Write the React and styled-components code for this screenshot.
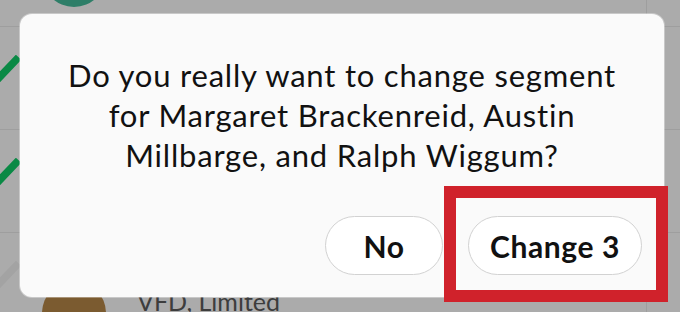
import React from "react";
import styled, { createGlobalStyle } from "styled-components";

const Global = createGlobalStyle`
  html, body { margin: 0; padding: 0; }
  body { font-family: Lato, "Noto Sans", sans-serif; background: #fff; }
  #root { width: 680px; height: 312px; overflow: hidden; position: relative; }
`;

const Page = styled.div`
  display: flex;
  width: 680px;
  height: 312px;
  overflow: hidden;
  background: #fff;
`;

const List = styled.div`
  flex: 1;
  display: flex;
  flex-direction: column;
  margin-top: -76px;
  margin-left: -30px;
`;

const Row = styled.div`
  display: flex;
  align-items: center;
  min-height: ${(p) => p.$h}px;
  border-bottom: 1px solid #ececec;
  box-sizing: border-box;
  flex-shrink: 0;
`;

const CheckCell = styled.div`
  align-self: flex-start;
  width: 72px;
  box-sizing: border-box;
  padding: 28px 0 0 12px;
  flex-shrink: 0;
`;

const Avatar = styled.div`
  width: 64px;
  height: 64px;
  border-radius: 50%;
  background: ${(p) => p.$c};
  flex-shrink: 0;
`;

const Info = styled.div`
  display: flex;
  flex-direction: column;
  margin: 0 0 24px 31px;
  font-size: 25px;
  line-height: 30px;
  color: #5c5c5c;
  white-space: nowrap;
`;

const SideCol = styled.div`
  width: 33px;
  border-left: 1px solid #ececec;
  display: flex;
  flex-direction: column;
  margin-top: -76px;
`;

const SideCell = styled.div`
  height: ${(p) => p.$h}px;
  border-bottom: 1px solid #ececec;
  box-sizing: border-box;
  flex-shrink: 0;
`;

const Dim = styled.div`
  position: absolute;
  inset: 0;
  background: rgba(0, 0, 0, 0.33);
`;

const Modal = styled.div`
  position: absolute;
  left: 20px;
  top: 14px;
  width: 644px;
  height: 283px;
  box-sizing: border-box;
  background: #fafafa;
  border-radius: 12px;
  box-shadow: 0 0 0 1px rgba(255, 255, 255, 0.35);
  display: flex;
  flex-direction: column;
  padding: 41px 22px 22px;
`;

const Message = styled.p`
  margin: 0;
  text-align: center;
  font-size: 31px;
  letter-spacing: 0.8px;
  line-height: 40px;
  color: #111;
  padding: 0 20px;
`;

const Actions = styled.div`
  margin-top: auto;
  display: flex;
  justify-content: flex-end;
  gap: 25px;
`;

const Button = styled.button`
  height: 59px;
  width: ${(p) => p.$w}px;
  border-radius: 30px;
  border: 1.5px solid #d2d2d2;
  background: #fff;
  font-family: inherit;
  font-weight: 700;
  font-size: 30px;
  letter-spacing: 0.6px;
  color: #111;
  padding: 0;
`;

const Highlight = styled.div`
  position: absolute;
  left: 444px;
  top: 186px;
  width: 224px;
  height: 116px;
  box-sizing: border-box;
  border: 12px solid #d0222b;
`;

const Check = ({ color }) => (
  <svg width="40" height="34" viewBox="0 0 40 34">
    <path d="M4 16 L14 26 L34 5" fill="none" stroke={color} strokeWidth="7.5" strokeLinecap="square" />
  </svg>
);

const rows = [
  { h: 103, check: null, avatar: "#45bc9b", lines: [] },
  { h: 103, check: "#10cd68", avatar: null, lines: [] },
  { h: 103, check: "#10cd68", avatar: null, lines: [] },
  { h: 160, check: "#f4f4f4", avatar: "#b88848", lines: ["Peggy Brackenreid", "VFD, Limited", "Segment A"] },
];

export default function App() {
  return (
    <>
      <Global />
      <Page>
        <List>
          {rows.map((r, i) => (
            <Row key={i} $h={r.h}>
              <CheckCell>{r.check && <Check color={r.check} />}</CheckCell>
              {r.avatar && <Avatar $c={r.avatar} />}
              <Info>
                {r.lines.map((l, j) => (
                  <span key={j}>{l}</span>
                ))}
              </Info>
            </Row>
          ))}
        </List>
        <SideCol>
          {rows.map((r, i) => (
            <SideCell key={i} $h={r.h} />
          ))}
        </SideCol>
      </Page>
      <Dim />
      <Modal>
        <Message>
          Do you really want to change segment for Margaret Brackenreid, Austin Millbarge, and Ralph Wiggum?
        </Message>
        <Actions>
          <Button $w={118}>No</Button>
          <Button $w={174}>Change 3</Button>
        </Actions>
      </Modal>
      <Highlight />
    </>
  );
}
